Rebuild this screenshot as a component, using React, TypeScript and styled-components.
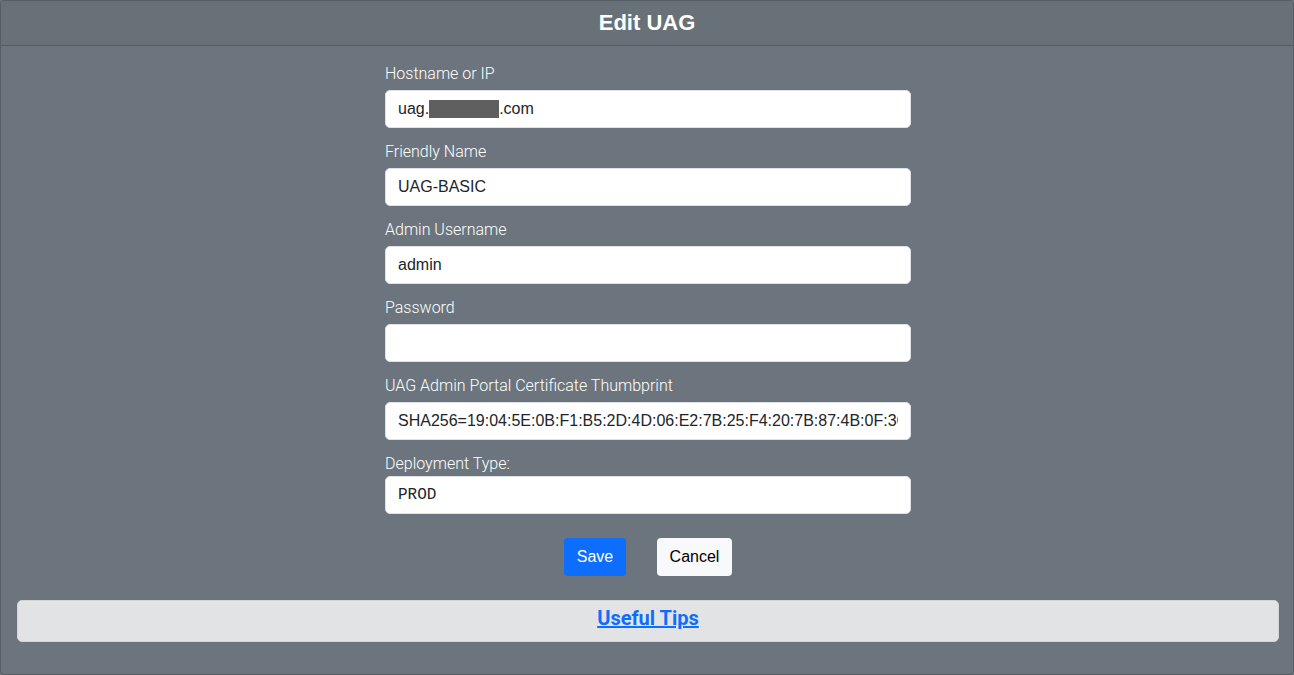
import React from "react";
import styled, { createGlobalStyle } from "styled-components";

const Global = createGlobalStyle`
  html, body { margin: 0; padding: 0; background: #6c757d; }
  body { font-family: Roboto, "Liberation Sans", Arial, sans-serif; }
  * { box-sizing: border-box; }
`;

const Card = styled.div`
  width: 1294px;
  height: 675px;
  background: #6c757d;
  border: 1px solid #565d64;
  border-radius: 4px;
  display: flex;
  flex-direction: column;
  overflow: hidden;
`;

const Header = styled.div`
  height: 45px;
  flex: none;
  background: #697178;
  border-bottom: 1px solid #545b62;
  display: flex;
  align-items: center;
  justify-content: center;
`;

const Title = styled.h4`
  margin: 0;
  color: #fff;
  font-family: "Liberation Sans", Arial, sans-serif;
  font-size: 22px;
  font-weight: 700;
`;

const Body = styled.div`
  display: flex;
  flex-direction: column;
  align-items: center;
  padding: 16px 14px 0 16px;
`;

const Form = styled.div`
  width: 526px;
  display: flex;
  flex-direction: column;
`;

const Group = styled.div`
  display: flex;
  flex-direction: column;
  margin-bottom: 12px;
`;

const Label = styled.label<{ $tight?: boolean }>`
  color: #fff;
  font-size: 16px;
  font-weight: 300;
  line-height: 24px;
  margin-bottom: ${(p) => (p.$tight ? "0" : "4px")};
`;

const fieldCss = `
  width: 100%;
  height: 38px;
  flex: none;
  background: #fff;
  border: 1px solid #dee2e6;
  border-radius: 5px;
  padding: 0 12px;
  color: #212529;
  font-size: 16px;
  font-family: "Liberation Sans", Arial, sans-serif;
  outline: none;
`;

const Field = styled.div<{ $mono?: boolean }>`
  ${fieldCss}
  display: flex;
  align-items: center;
  white-space: nowrap;
  overflow: hidden;
  font-family: ${(p) =>
    p.$mono ? '"Liberation Mono", "Courier New", monospace' : '"Liberation Sans", Arial, sans-serif'};
`;

const Input = styled.input`
  ${fieldCss}
`;

const Redacted = styled.span`
  display: inline-block;
  width: 70px;
  height: 18px;
  background: #5f5f5f;
`;

const Buttons = styled.div`
  display: flex;
  justify-content: center;
  gap: 31px;
  margin-top: 12px;
  margin-bottom: 24px;
`;

const Button = styled.button<{ $primary?: boolean }>`
  height: 38px;
  padding: 0 12px;
  border-radius: 4px;
  border: none;
  font-size: 16px;
  font-family: "Liberation Sans", Arial, sans-serif;
  background: ${(p) => (p.$primary ? "#0d6efd" : "#f8f9fa")};
  color: ${(p) => (p.$primary ? "#fff" : "#000")};
  min-width: ${(p) => (p.$primary ? "62px" : "75px")};
`;

const Tips = styled.div`
  align-self: stretch;
  height: 42px;
  background: #e2e3e5;
  border: 1px solid #d3d6d8;
  border-radius: 5px;
  display: flex;
  align-items: center;
  justify-content: center;
  padding-bottom: 7px;
`;

const TipsLink = styled.a`
  color: #0d6efd;
  font-size: 20px;
  font-weight: 700;
  text-decoration: underline;
`;

export default function App() {
  return (
    <>
      <Global />
      <Card>
        <Header>
          <Title>Edit UAG</Title>
        </Header>
        <Body>
          <Form>
            <Group>
              <Label>Hostname or IP</Label>
              <Field>
                uag.<Redacted />.com
              </Field>
            </Group>
            <Group>
              <Label>Friendly Name</Label>
              <Input readOnly value="UAG-BASIC" />
            </Group>
            <Group>
              <Label>Admin Username</Label>
              <Input readOnly value="admin" />
            </Group>
            <Group>
              <Label>Password</Label>
              <Input type="password" readOnly value="" />
            </Group>
            <Group>
              <Label>UAG Admin Portal Certificate Thumbprint</Label>
              <Input
                readOnly
                value="SHA256=19:04:5E:0B:F1:B5:2D:4D:06:E2:7B:25:F4:20:7B:87:4B:0F:3C:11:9A"
              />
            </Group>
            <Group>
              <Label $tight>Deployment Type:</Label>
              <Field $mono>PROD</Field>
            </Group>
          </Form>
          <Buttons>
            <Button $primary>Save</Button>
            <Button>Cancel</Button>
          </Buttons>
          <Tips>
            <TipsLink href="#">Useful Tips</TipsLink>
          </Tips>
        </Body>
      </Card>
    </>
  );
}
